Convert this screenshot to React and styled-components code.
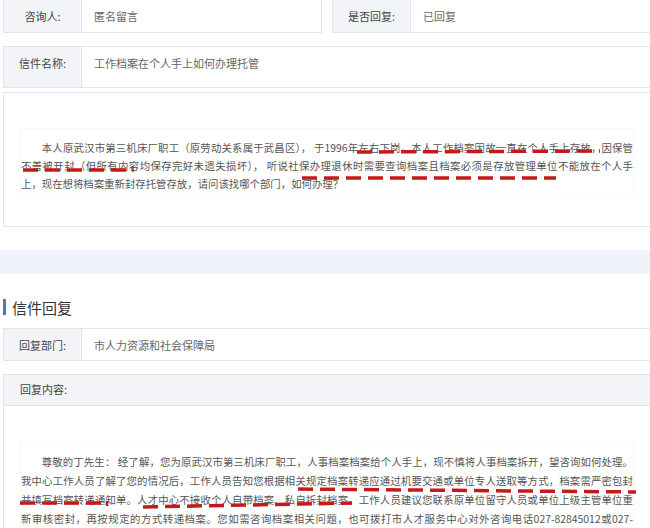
import React from 'react';
import styled, { createGlobalStyle } from 'styled-components';

const GlobalStyle = createGlobalStyle`
    body {
        margin: 0;
        background: #fff;
        overflow: hidden;
        font-family: "Noto Sans CJK SC", "Liberation Sans", sans-serif;
    }
`;

const Shell = styled.div`
    position: relative;
    width: 650px;
    height: 528px;
    overflow: hidden;
`;

const Page = styled.div`
    width: 648px;
    padding-left: 3px;
`;

// 上面 信息行
const Pair = styled.div`
    display: grid;
    grid-template-columns: 1fr 1fr;
    gap: 10px;
    margin-top: -1px;
`;

const InfoBox = styled.div`
    display: flex;
    height: ${p => p.h || 33}px;
    margin-top: ${p => p.mt || 0}px;
    border: 1px solid #e3e5ea;
    box-sizing: border-box;
    font-size: 11px;
`;

const Label = styled.div`
    width: 77px;
    flex-shrink: 0;
    display: flex;
    align-items: center;
    justify-content: center;
    background: #f3f4f8;
    border-right: 1px solid #e3e5ea;
    color: #444;
    padding-bottom: ${p => p.pb || 0}px;
`;

const Value = styled.div`
    display: flex;
    align-items: center;
    padding-left: 12px;
    color: #666;
    padding-bottom: ${p => p.pb || 0}px;
`;

const ContentBox = styled.div`
    margin-top: 4px;
    height: 135px;
    box-sizing: border-box;
    border: 1px solid #e3e5ea;
    padding: 35px 16px 0 16px;
`;

const Letter = styled.div`
    border: 1px dotted #f0f0f0;
    padding-top: 10px;
    font-size: 10.4px;
    line-height: ${p => p.lh}px;
    color: #555;
`;

const TextLine = styled.div`
    white-space: nowrap;
    text-align: justify;
    text-align-last: ${p => (p.ragged ? 'left' : 'justify')};
    text-indent: ${p => (p.first ? '2em' : '0')};
`;

const Band = styled.div`
    margin: 23px 0 0 -3px;
    width: 654px;
    height: 24px;
    background: #eef3f9;
`;

const Heading = styled.div`
    display: flex;
    align-items: center;
    gap: 6px;
    margin-top: 24px;
    height: 18px;
    font-size: 15px;
    color: #333;
    &::before {
        content: '';
        width: 3px;
        height: 16px;
        background: #4a78c2;
    }
`;

const ReplyBox = styled.div`
    margin-top: 13px;
    border: 1px solid #e3e5ea;
    height: 200px;
`;

const ReplyHead = styled.div`
    height: 31px;
    display: flex;
    align-items: center;
    padding: 0 0 3px 16px;
    box-sizing: border-box;
    background: #f3f4f8;
    border-bottom: 1px solid #e3e5ea;
    font-size: 11px;
    color: #444;
`;

const ReplyBody = styled.div`
    padding: 35px 16px 0 16px;
`;

const Marks = styled.svg`
    position: absolute;
    left: 0;
    top: 0;
    pointer-events: none;
`;

const marks = [
    [357, 152, 600, 151],
    [23, 170, 128, 170],
    [302, 178, 556, 178],
    [20, 503, 102, 503],
    [143, 507, 352, 503],
    [298, 489, 636, 492],
];

const question = [
    '本人原武汉市第三机床厂职工（原劳动关系属于武昌区）， 于1996年左右下岗，本人工作档案因故一直在个人手上存放，因保管',
    '不善被开封（但所有内容均保存完好未遗失损坏）， 听说社保办理退休时需要查询档案且档案必须是存放管理单位不能放在个人手',
    '上，现在想将档案重新封存托管存放，请问该找哪个部门，如何办理？',
];

const answer = [
    '尊敬的丁先生： 经了解，您为原武汉市第三机床厂职工，人事档案档案给个人手上，现不慎将人事档案拆开，望咨询如何处理。',
    '我中心工作人员了解了您的情况后，工作人员告知您根据相关规定档案转递应通过机要交通或单位专人送取等方式，档案需严密包封',
    '并填写档案转递通知单。人才中心不接收个人自带档案、私自拆封档案。工作人员建议您联系原单位留守人员或单位上级主管单位重',
    '新审核密封，再按规定的方式转递档案。您如需咨询档案相关问题，也可拨打市人才服务中心对外咨询电话027-82845012或027-',
];

const Paragraph = ({ lines, lh, raggedEnd }) => (
    <Letter lh={lh}>
        {lines.map((t, i) => (
            <TextLine key={i} first={i === 0} ragged={raggedEnd && i === lines.length - 1}>{t}</TextLine>
        ))}
    </Letter>
);

export default function App() {
    return (
        <Shell>
            <GlobalStyle />
            <Page>
                <Pair>
                    <InfoBox h={34}>
                        <Label>咨询人:</Label>
                        <Value>匿名留言</Value>
                    </InfoBox>
                    <InfoBox h={34}>
                        <Label>是否回复:</Label>
                        <Value>已回复</Value>
                    </InfoBox>
                </Pair>
                <InfoBox h={42} mt={13}>
                    <Label pb={8}>信件名称:</Label>
                    <Value pb={8}>工作档案在个人手上如何办理托管</Value>
                </InfoBox>
                <ContentBox>
                    <Paragraph lines={question} lh={18} raggedEnd />
                </ContentBox>

                <Band />

                <Heading>信件回复</Heading>
                <InfoBox h={33} mt={12}>
                    <Label>回复部门:</Label>
                    <Value>市人力资源和社会保障局</Value>
                </InfoBox>
                <ReplyBox>
                    <ReplyHead>回复内容:</ReplyHead>
                    <ReplyBody>
                        <Paragraph lines={answer} lh={19} />
                    </ReplyBody>
                </ReplyBox>
            </Page>

            <Marks width="650" height="528">
                {marks.map(([x1, y1, x2, y2], i) => (
                    <line key={i} x1={x1} y1={y1} x2={x2} y2={y2}
                        stroke="#c41a1a" strokeWidth="3.5" strokeDasharray="15 7" />
                ))}
                <line x1="133" y1="166" x2="133" y2="172" stroke="#c41a1a" strokeWidth="1.5" />
                <line x1="107" y1="501" x2="107" y2="506" stroke="#c41a1a" strokeWidth="2.5" />
            </Marks>
        </Shell>
    );
}
